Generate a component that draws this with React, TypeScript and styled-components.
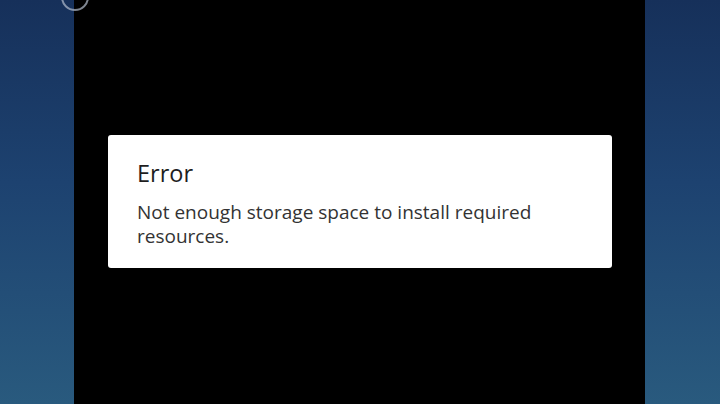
import React from "react";
import styled, { createGlobalStyle } from "styled-components";

const Global = createGlobalStyle`
  html, body { margin: 0; padding: 0; width: 720px; height: 404px; overflow: hidden; }
  body { font-family: "Open Sans", "Noto Sans", sans-serif; }
`;

const Screen = styled.div`
  width: 720px;
  height: 404px;
  display: grid;
  grid-template-columns: 74px 571px 75px;
  background: linear-gradient(180deg, #16305a 0%, #1d4270 45%, #295a7e 100%);
  position: relative;
  overflow: hidden;
`;

const Side = styled.div``;

const Stage = styled.div`
  background: #000;
  padding-top: 135px;
  padding-left: 34px;
  padding-right: 33px;
`;

const Ring = styled.div`
  position: absolute;
  left: 61px;
  top: -17px;
  width: 24px;
  height: 24px;
  border-radius: 50%;
  border: 2px solid rgba(180, 190, 205, 0.7);
`;

const Dialog = styled.div`
  background: #fff;
  border-radius: 3px;
  height: 133px;
  box-sizing: border-box;
  padding: 23px 29px 0 29px;
`;

const Title = styled.div`
  font-size: 23.5px;
  line-height: 30px;
  color: #1e1e1e;
  margin-bottom: 12px;
`;

const Body = styled.div`
  font-size: 19px;
  line-height: 24px;
  color: #333;
`;

export default function App() {
  return (
    <>
      <Global />
      <Screen>
        <Side />
        <Stage>
          <Dialog>
            <Title>Error</Title>
            <Body>Not enough storage space to install required resources.</Body>
          </Dialog>
        </Stage>
        <Side />
        <Ring />
      </Screen>
    </>
  );
}
